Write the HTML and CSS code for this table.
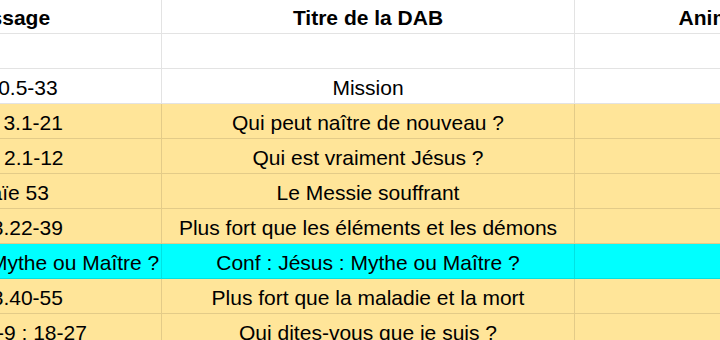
FILE: index.html
```html
<!DOCTYPE html>
<html lang="fr">
<head>
<meta charset="utf-8">
<title>DAB</title>
<link rel="stylesheet" href="styles.css">
</head>
<body>
<div class="viewport">
  <div class="sheet">
    <div class="row header">
      <div class="cell">Passage</div>
      <div class="cell">Titre de la DAB</div>
      <div class="cell">Animateur</div>
    </div>
    <div class="row">
      <div class="cell"></div>
      <div class="cell"></div>
      <div class="cell"></div>
    </div>
    <div class="row">
      <div class="cell">Mt 10.5-33</div>
      <div class="cell">Mission</div>
      <div class="cell"></div>
    </div>
    <div class="row yellow">
      <div class="cell">Jean 3.1-21</div>
      <div class="cell">Qui peut naître de nouveau ?</div>
      <div class="cell"></div>
    </div>
    <div class="row yellow">
      <div class="cell">Marc 2.1-12</div>
      <div class="cell">Qui est vraiment Jésus ?</div>
      <div class="cell"></div>
    </div>
    <div class="row yellow">
      <div class="cell">Ésaïe 53</div>
      <div class="cell">Le Messie souffrant</div>
      <div class="cell"></div>
    </div>
    <div class="row yellow">
      <div class="cell">Luc 8.22-39</div>
      <div class="cell">Plus fort que les éléments et les démons</div>
      <div class="cell"></div>
    </div>
    <div class="row cyan">
      <div class="cell">Conf : Jésus : Mythe ou Maître ?</div>
      <div class="cell">Conf : Jésus : Mythe ou Maître ?</div>
      <div class="cell"></div>
    </div>
    <div class="row yellow">
      <div class="cell">Luc 8.40-55</div>
      <div class="cell">Plus fort que la maladie et la mort</div>
      <div class="cell"></div>
    </div>
    <div class="row yellow">
      <div class="cell">Luc 9.7-9 ; 18-27</div>
      <div class="cell">Qui dites-vous que je suis ?</div>
      <div class="cell"></div>
    </div>
  </div>
</div>
</body>
</html>
```

FILE: styles.css
```css
html, body {
  margin: 0;
  padding: 0;
  background: #ffffff;
}

.viewport {
  width: 720px;
  height: 340px;
  overflow: hidden;
  position: relative;
}

.sheet {
  margin-left: -146px;
  margin-top: -1px;
  width: 1033px;
  font-family: "Liberation Sans", Arial, Helvetica, sans-serif;
  font-size: 21px;
  color: #000;
}

.row {
  display: grid;
  grid-template-columns: 308px 413px 312px;
  height: 35px;
  box-sizing: border-box;
  border-bottom: 1px solid rgba(0, 0, 0, 0.11);
  background: #ffffff;
}

.row.yellow {
  background: #ffe599;
}

.row.cyan {
  background: #00ffff;
}

.row.header {
  font-weight: bold;
}

.cell {
  box-sizing: border-box;
  border-right: 1px solid rgba(0, 0, 0, 0.11);
  display: flex;
  align-items: flex-end;
  justify-content: center;
  line-height: 24px;
  padding-bottom: 3px;
  white-space: nowrap;
  overflow: hidden;
}
```
